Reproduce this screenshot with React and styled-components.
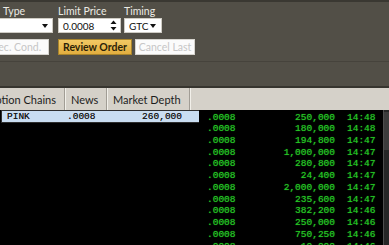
// App.jsx
import styled, { createGlobalStyle } from "styled-components";

const GlobalStyle = createGlobalStyle`
  html, body {
    margin: 0;
    padding: 0;
    background: #524f47;
  }
  body {
    font-family: Lato, "Open Sans", sans-serif;
  }
`;

const depthRows = [
  { price: ".0008", size: "250,000", time: "14:48" },
  { price: ".0008", size: "180,000", time: "14:48" },
  { price: ".0008", size: "194,800", time: "14:47" },
  { price: ".0008", size: "1,000,000", time: "14:47" },
  { price: ".0008", size: "280,800", time: "14:47" },
  { price: ".0008", size: "24,400", time: "14:47" },
  { price: ".0008", size: "2,000,000", time: "14:47" },
  { price: ".0008", size: "235,600", time: "14:47" },
  { price: ".0008", size: "382,200", time: "14:46" },
  { price: ".0008", size: "250,000", time: "14:46" },
  { price: ".0008", size: "750,250", time: "14:46" },
  { price: ".0008", size: "10,000", time: "14:46" },
];

// ── Layout ─────────────────────────────────────────────

const Page = styled.div`
  width: 389px;
  height: 245px;
  overflow: hidden;
  display: flex;
  flex-direction: column;
  background: #524f47;
`;

const OrderPanel = styled.div`
  height: 61px;
  box-sizing: border-box;
  border-top: 2px solid #3a3832;
  padding-top: 3px;
  display: flex;
  flex-direction: column;
`;

const FieldRow = styled.div`
  display: flex;
  align-items: flex-start;
`;

const Field = styled.div`
  display: flex;
  flex-direction: column;
  gap: 1px;
  flex: none;
  width: ${({ $w }) => $w}px;
  margin-left: ${({ $ml }) => $ml}px;
`;

const Label = styled.div`
  height: 12px;
  line-height: 12px;
  font-size: 10.5px;
  color: #ecebe4;
  padding-left: ${({ $pl }) => $pl || 0}px;
  white-space: nowrap;
`;

const Control = styled.div`
  height: 15px;
  box-sizing: border-box;
  background: #fff;
  border: 1px solid #cfccc4;
  display: flex;
  align-items: center;
  justify-content: space-between;
  padding: 0 ${({ $pr }) => $pr || 4}px 0 4px;
  font-size: 10px;
  color: #111;
  white-space: nowrap;
  overflow: hidden;
`;

const Caret = styled.span`
  flex: none;
  width: 0;
  height: 0;
  border-left: 3px solid transparent;
  border-right: 3px solid transparent;
  border-top: 4px solid #111;
`;

const ButtonRow = styled.div`
  display: flex;
  margin-top: 6px;
`;

const Button = styled.div`
  flex: none;
  height: 16px;
  box-sizing: border-box;
  width: ${({ $w }) => $w}px;
  margin-left: ${({ $ml }) => $ml}px;
  display: flex;
  align-items: center;
  justify-content: center;
  font-size: 10.5px;
  white-space: nowrap;
  overflow: hidden;
  border: 1px solid
    ${({ $primary }) => ($primary ? "#a8842c" : "#d6d4ce")};
  background: ${({ $primary }) =>
    $primary ? "linear-gradient(#f2c964, #e2ae3f)" : "#fbfbfb"};
  color: ${({ $primary }) => ($primary ? "#2a2208" : "#c6c6c6")};
  font-weight: ${({ $primary }) => ($primary ? 700 : 400)};
`;

const Gap = styled.div`
  height: 24px;
  border-top: 1px solid #46433c;
  border-bottom: 2px solid #37352f;
`;

const TabHeader = styled.div`
  height: 22px;
  flex: none;
  display: flex;
  background: #d5d1c9;
`;

const Tab = styled.div`
  flex: none;
  width: ${({ $w }) => $w}px;
  box-sizing: border-box;
  border-right: 1px solid #a19d95;
  box-shadow: 1px 0 0 #f2f0ea;
  display: flex;
  align-items: center;
  justify-content: ${({ $end }) => ($end ? "flex-end" : "flex-start")};
  padding: ${({ $end }) => ($end ? "0 8px 0 0" : "0 0 0 6px")};
  overflow: hidden;
  font-size: 11px;
  color: #1d1d1d;
  white-space: nowrap;
`;

const Body = styled.div`
  flex: 1;
  display: flex;
  background: #000;
  min-height: 0;
`;

const LeftPane = styled.div`
  width: 199px;
  flex: none;
`;

const SelectedRow = styled.div`
  margin-left: 1px;
  height: 13px;
  box-sizing: border-box;
  border: 1px solid #2e2e2e;
  border-right: none;
  background: #c9ddf1;
  display: grid;
  grid-template-columns: 60px 40px 75px;
  align-items: center;
  padding-left: 5px;
  font-family: "Liberation Mono", monospace;
  font-size: 9.5px;
  color: #141414;
  text-shadow: 0 0 0.6px rgba(20, 20, 20, 0.7);
`;

const Right = styled.span`
  text-align: right;
`;

const DepthPane = styled.div`
  width: 184px;
  flex: none;
  padding-top: 1.5px;
  font-family: "Liberation Mono", monospace;
  font-size: 9.5px;
  color: #25c825;
  text-shadow: 0 0 1px rgba(40, 220, 40, 0.7);
`;

const DepthRow = styled.div`
  height: 11.74px;
  line-height: 11.74px;
  display: grid;
  grid-template-columns: 40px 76px 36px;
  column-gap: 12px;
  padding-left: 8px;
  white-space: nowrap;
`;

const Scrollbar = styled.div`
  flex: 1;
  background: #262626;
  border-left: 1px solid #4e4e4e;
  display: flex;
  flex-direction: column;
`;

const Thumb = styled.div`
  height: 38px;
  margin-top: 2px;
  background: #3c3c3c;
`;

function Spinner() {
  return (
    <svg width="7" height="11" viewBox="0 0 7 11">
      <path d="M3.5 0.5 L6.5 4 L0.5 4 Z" fill="#111" />
      <path d="M0.5 7 L6.5 7 L3.5 10.5 Z" fill="#111" />
    </svg>
  );
}

export default function App() {
  return (
    <>
      <GlobalStyle />
      <Page>
        <OrderPanel>
          <FieldRow>
            <Field $w={81} $ml={-28}>
              <Label $pl={31}>Type</Label>
              <Control>
                <span>Limit</span>
                <Caret />
              </Control>
            </Field>
            <Field $w={63} $ml={5}>
              <Label>Limit Price</Label>
              <Control $pr={3}>
                <span>0.0008</span>
                <Spinner />
              </Control>
            </Field>
            <Field $w={38} $ml={3}>
              <Label>Timing</Label>
              <Control $pr={5}>
                <span>GTC</span>
                <Caret />
              </Control>
            </Field>
          </FieldRow>

          <ButtonRow>
            <Button $w={70} $ml={-21}>Spec. Cond.</Button>
            <Button $w={74} $ml={9} $primary>
              Review Order
            </Button>
            <Button $w={60} $ml={3}>Cancel Last</Button>
          </ButtonRow>
        </OrderPanel>

        <Gap />

        <TabHeader>
          <Tab $w={65} $end>Option Chains</Tab>
          <Tab $w={42}>News</Tab>
          <Tab $w={83}>Market Depth</Tab>
        </TabHeader>

        <Body>
          <LeftPane>
            <SelectedRow>
              <span>PINK</span>
              <span>.0008</span>
              <Right>260,000</Right>
            </SelectedRow>
          </LeftPane>

          <DepthPane>
            {depthRows.map((r, i) => (
              <DepthRow key={i}>
                <span>{r.price}</span>
                <Right>{r.size}</Right>
                <span>{r.time}</span>
              </DepthRow>
            ))}
          </DepthPane>

          <Scrollbar>
            <Thumb />
          </Scrollbar>
        </Body>
      </Page>
    </>
  );
}
